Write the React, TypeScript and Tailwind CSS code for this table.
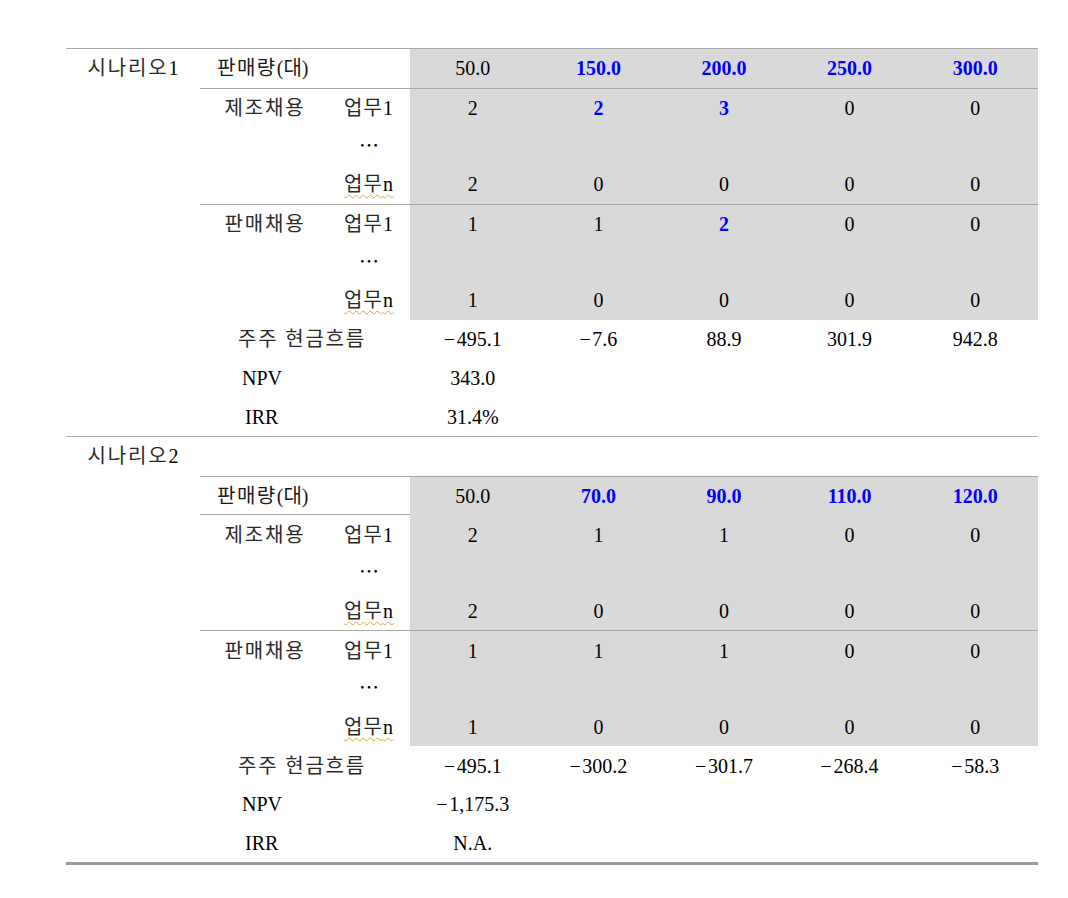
type Val = { v: string; hi?: boolean };

const ROW = "h-[38.7px]";
const GRID = "grid grid-cols-[128px_82px_repeat(5,125.6px)]";
const SUM_GRID = "grid grid-cols-[210px_repeat(5,125.6px)]";
const LINE = "border-[#a6a6a6]";
const SERIF = "font-['Liberation_Serif',serif]";

const m = (s: string) => "\u2212\u200a" + s;

function vals(list: (string | [string])[]): Val[] {
  return list.map((x) => (Array.isArray(x) ? { v: x[0], hi: true } : { v: x }));
}

function DataCell({ cell, gray }: { cell?: Val; gray?: boolean }) {
  return (
    <div
      className={`${ROW} flex items-center justify-center ${gray ? "bg-[#d9d9d9]" : ""} ${
        cell?.hi ? "font-bold text-[#0000ff]" : "text-black"
      }`}
    >
      {cell?.v}
    </div>
  );
}

function SubRow({
  group,
  task,
  cells,
  top,
}: {
  group?: string;
  task: "1" | "dots" | "n";
  cells?: Val[];
  top?: boolean;
}) {
  return (
    <div className={`${GRID} ${ROW} ${top ? `border-t ${LINE}` : ""}`}>
      <div className="flex items-center justify-center pl-[2px] tracking-[1.8px] text-[#2a2a2a]">{group}</div>
      <div className="flex items-center justify-center text-[#2a2a2a]">
        {task === "1" && (
          <span className="tracking-[1px]">
            업무<span className={`${SERIF} text-black`}>1</span>
          </span>
        )}
        {task === "dots" && <span className="text-black">⋯</span>}
        {task === "n" && (
          <span className="tracking-[1px] underline decoration-wavy decoration-[#e5a03a] decoration-1 underline-offset-[3px]">
            업무<span className={`${SERIF} text-black`}>n</span>
          </span>
        )}
      </div>
      {[0, 1, 2, 3, 4].map((i) => (
        <DataCell key={i} cell={cells?.[i]} gray />
      ))}
    </div>
  );
}

function Group({ name, first, last, top }: { name: string; first: Val[]; last: Val[]; top?: boolean }) {
  return (
    <div>
      <SubRow group={name} task="1" cells={first} top={top} />
      <SubRow task="dots" />
      <SubRow task="n" cells={last} />
    </div>
  );
}

function SumRow({ label, pad, cells, kr }: { label: string; pad: string; cells: Val[]; kr?: boolean }) {
  return (
    <div className={`${SUM_GRID} ${ROW}`}>
      <div className={`flex items-center ${pad} whitespace-pre ${kr ? "tracking-[1.8px] text-[#2a2a2a]" : "text-black"}`}>
        {label}
      </div>
      {[0, 1, 2, 3, 4].map((i) => (
        <DataCell key={i} cell={cells[i]} />
      ))}
    </div>
  );
}

type Scenario = {
  title: string;
  sales: Val[];
  mfg: [Val[], Val[]];
  sell: [Val[], Val[]];
  cash: Val[];
  npv: string;
  irr: string;
};

const scenarios: Scenario[] = [
  {
    title: "시나리오",
    sales: vals(["50.0", ["150.0"], ["200.0"], ["250.0"], ["300.0"]]),
    mfg: [vals(["2", ["2"], ["3"], "0", "0"]), vals(["2", "0", "0", "0", "0"])],
    sell: [vals(["1", "1", ["2"], "0", "0"]), vals(["1", "0", "0", "0", "0"])],
    cash: vals([m("495.1"), m("7.6"), "88.9", "301.9", "942.8"]),
    npv: "343.0",
    irr: "31.4%",
  },
  {
    title: "시나리오",
    sales: vals(["50.0", ["70.0"], ["90.0"], ["110.0"], ["120.0"]]),
    mfg: [vals(["2", "1", "1", "0", "0"]), vals(["2", "0", "0", "0", "0"])],
    sell: [vals(["1", "1", "1", "0", "0"]), vals(["1", "0", "0", "0", "0"])],
    cash: vals([m("495.1"), m("300.2"), m("301.7"), m("268.4"), m("58.3")]),
    npv: m("1,175.3"),
    irr: "N.A.",
  },
];

function ScenarioBlock({ s, num, titleRow }: { s: Scenario; num: string; titleRow?: boolean }) {
  return (
    <div className="flex">
      <div className="w-[134px] shrink-0">
        <div className={`${ROW} flex items-center justify-center text-[#2a2a2a]`}>
          <span className="tracking-[1.8px]">{s.title}</span>
          <span className={`${SERIF} text-black`}>{num}</span>
        </div>
      </div>
      <div className="flex-1">
        {titleRow && <div className={ROW} />}
        <div className={`${GRID} ${ROW} ${titleRow ? `border-t ${LINE}` : ""}`}>
          <div className="col-span-2 flex items-center pl-[17px] text-[#1a1a1a]">
            <span className="tracking-[1.5px]">판매량</span>
            <span>(</span>
            <span>대</span>
            <span>)</span>
          </div>
          {s.sales.map((c, i) => (
            <DataCell key={i} cell={c} gray />
          ))}
        </div>
        <Group name="제조채용" first={s.mfg[0]} last={s.mfg[1]} top />
        <Group name="판매채용" first={s.sell[0]} last={s.sell[1]} top />
        <SumRow label="주주 현금흐름" pad="pl-[38px]" cells={s.cash} kr />
        <SumRow label="NPV" pad="pl-[42px]" cells={[{ v: s.npv }]} />
        <SumRow label="IRR" pad="pl-[45px]" cells={[{ v: s.irr }]} />
      </div>
    </div>
  );
}

export default function App() {
  return (
    <div
      className="min-h-[898px] w-[1068px] bg-white pt-[48px] text-[20px] leading-none"
      style={{ fontFamily: '"Liberation Serif", "Noto Sans CJK KR", serif' }}
    >
      <div className={`ml-[66px] w-[972px] border-t border-b-[3px] ${LINE} border-b-[#9a9a9a]`}>
        <div className={`border-b ${LINE}`}>
          <ScenarioBlock s={scenarios[0]} num="1" />
        </div>
        <ScenarioBlock s={scenarios[1]} num="2" titleRow />
      </div>
    </div>
  );
}
